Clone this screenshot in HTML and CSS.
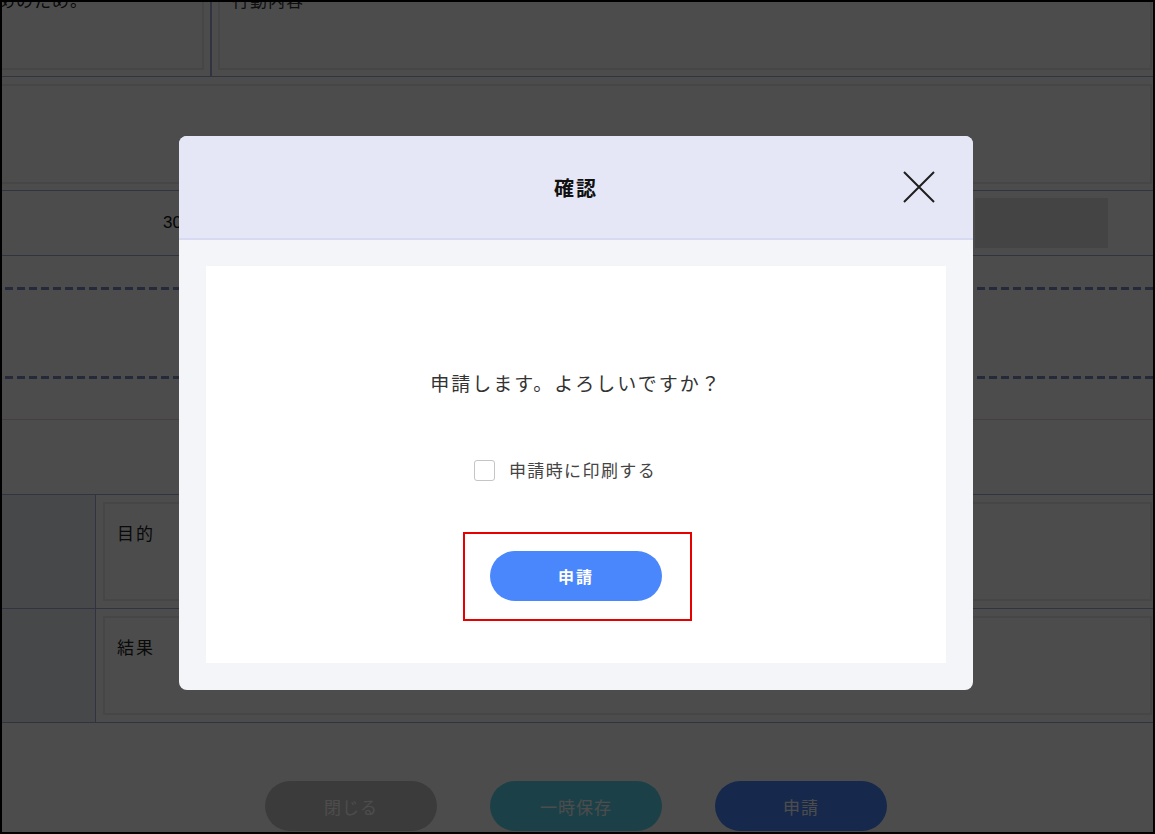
FILE: index.html
```html
<!DOCTYPE html>
<html lang="ja">
<head>
<meta charset="utf-8">
<title>確認</title>
<link rel="stylesheet" href="styles.css">
</head>
<body>
<div class="frame">
  <div class="page">
    <div class="row row-top">
      <div class="cell cell-a"><div class="box"><span class="cut-text">めのため。</span></div></div>
      <div class="cell cell-b"><div class="box"><span class="cut-text">行動内容</span></div></div>
    </div>
    <div class="row row-big">
      <div class="box"></div>
    </div>
    <div class="row row-num">
      <div class="num">30</div>
      <div class="graybox"></div>
    </div>
    <div class="row row-dash">
      <div class="dash"></div>
      <div class="dash"></div>
    </div>
    <div class="row row-empty"></div>
    <div class="row row-field">
      <div class="side"></div>
      <div class="field"><div class="box"><span class="label">目的</span></div></div>
    </div>
    <div class="row row-field">
      <div class="side"></div>
      <div class="field"><div class="box"><span class="label">結果</span></div></div>
    </div>
    <div class="footer">
      <button class="btn btn-gray">閉じる</button>
      <button class="btn btn-teal">一時保存</button>
      <button class="btn btn-blue">申請</button>
    </div>
  </div>

  <div class="overlay"></div>

  <div class="modal">
    <div class="modal-head">
      <h2 class="modal-title">確認</h2>
      <button class="close" aria-label="閉じる">
        <svg width="32" height="32" viewBox="0 0 32 32"><path d="M1 1 L31 31 M31 1 L1 31" stroke="#1e1e1e" stroke-width="2" fill="none"/></svg>
      </button>
    </div>
    <div class="modal-body">
      <div class="panel">
        <p class="message">申請します。よろしいですか？</p>
        <label class="check"><span class="checkbox"></span><span class="check-label">申請時に印刷する</span></label>
        <button class="btn btn-submit">申請</button>
      </div>
    </div>
  </div>

  <div class="annotation"></div>
</div>
</body>
</html>
```

FILE: styles.css
```css
* { box-sizing: border-box; }
html, body { margin: 0; padding: 0; }
body {
  width: 1155px;
  height: 834px;
  overflow: hidden;
  background: #000;
  font-family: "Noto Sans CJK JP", "Noto Sans", sans-serif;
}
.frame {
  position: relative;
  width: 1155px;
  height: 834px;
  border: 2px solid #000;
  overflow: hidden;
}
.page {
  background: #fff;
  height: 830px;
  display: flex;
  flex-direction: column;
}
.row {
  display: flex;
  border-bottom: 1px solid #a3afcf;
}
.box {
  border: 2px solid #ebebeb;
  flex: 1;
  position: relative;
}
.row-top { height: 75px; }
.cell-a {
  width: 210px;
  display: flex;
  padding: 0 6px 6px 0;
  border-right: 2px solid #a3afcf;
}
.cell-a .box { border-top: none; border-left: none; }
.cell-b {
  flex: 1;
  display: flex;
  padding: 0 1px 6px 6px;
}
.cell-b .box { border-top: none; }
.cut-text {
  position: absolute;
  top: -12px;
  font-size: 17px;
  line-height: 20px;
  color: #222;
  letter-spacing: 1px;
}
.cell-a .cut-text { left: -4px; }
.cell-b .cut-text { left: 12px; color: #333; }

.row-big { height: 114px; padding: 7px 1px 6px 0; }
.row-big .box { border-left: none; }

.row-num {
  height: 65px;
  align-items: center;
  padding: 0 45px 0 0;
}
.num {
  margin-left: 161px;
  font-size: 17px;
  color: #111;
  font-family: "Liberation Sans", "Noto Sans CJK JP", sans-serif;
}
.graybox {
  margin-left: auto;
  width: 133px;
  height: 50px;
  background: #e4e4e5;
}

.row-dash {
  height: 164px;
  flex-direction: column;
  border-bottom-color: #e6d2d2;
}
.dash {
  height: 3px;
  margin-top: 31px;
  background: repeating-linear-gradient(to right, #7f8bbf 0 8px, transparent 8px 12px);
  background-position: 3px 0;
}
.dash + .dash { margin-top: 86px; }

.row-empty { height: 75px; }

.row-field { height: 114px; }
.side {
  width: 94px;
  background: #ecf0f3;
  border-right: 1px solid #a3afcf;
}
.field {
  flex: 1;
  display: flex;
  padding: 7px 1px 7px 7px;
}
.label {
  position: absolute;
  left: 12px;
  top: 16px;
  font-size: 17px;
  color: #222;
  letter-spacing: 2px;
}

.footer {
  flex: 1;
  display: flex;
  justify-content: center;
  align-items: flex-end;
  gap: 53px;
  padding: 0 3px 1px 0;
}
.btn {
  width: 172px;
  height: 50px;
  border: none;
  border-radius: 25px;
  color: #fff;
  font-family: "Noto Sans CJK JP", sans-serif;
  font-size: 16px;
  font-weight: 700;
  letter-spacing: 1px;
  padding: 0;
}
.footer .btn { font-weight: 400; font-size: 17px; }
.btn-gray { background: #c5c5c5; }
.btn-teal { background: #5ad8ee; }
.btn-blue { background: #4a86fc; }

.overlay {
  position: absolute;
  inset: 0;
  background: rgba(0, 0, 0, 0.7);
}

.modal {
  position: absolute;
  left: 177px;
  top: 134px;
  width: 794px;
  height: 554px;
  border-radius: 8px;
  overflow: hidden;
  background: #f4f5f9;
  display: flex;
  flex-direction: column;
}
.modal-head {
  height: 104px;
  background: #e5e7f6;
  border-bottom: 2px solid #d7daf1;
  display: flex;
  align-items: center;
  justify-content: center;
  position: relative;
}
.modal-title {
  margin: 0;
  font-size: 20px;
  font-weight: 700;
  color: #111;
  letter-spacing: 2px;
}
.close {
  position: absolute;
  right: 38px;
  top: 35px;
  width: 32px;
  height: 32px;
  padding: 0;
  border: none;
  background: none;
}
.close svg { display: block; }
.modal-body {
  flex: 1;
  padding: 26px 27px 27px;
  display: flex;
}
.panel {
  flex: 1;
  background: #fff;
  display: flex;
  flex-direction: column;
  align-items: center;
}
.message {
  margin: 103px 0 0;
  font-size: 19px;
  line-height: 28px;
  color: #333;
  letter-spacing: 2px;
}
.check {
  margin-top: 62px;
  margin-right: 22px;
  display: flex;
  align-items: center;
  gap: 14px;
}
.checkbox {
  width: 21px;
  height: 21px;
  border: 1px solid #c5c5c5;
  border-radius: 3px;
  background: #fff;
}
.check-label {
  font-size: 17px;
  line-height: 22px;
  color: #444;
  letter-spacing: 1.4px;
}
.btn-submit {
  margin-top: 70px;
  background: #4a86fc;
  letter-spacing: 2px;
}

.annotation {
  position: absolute;
  left: 461px;
  top: 530px;
  width: 229px;
  height: 89px;
  border: 2px solid #e60000;
}
```
